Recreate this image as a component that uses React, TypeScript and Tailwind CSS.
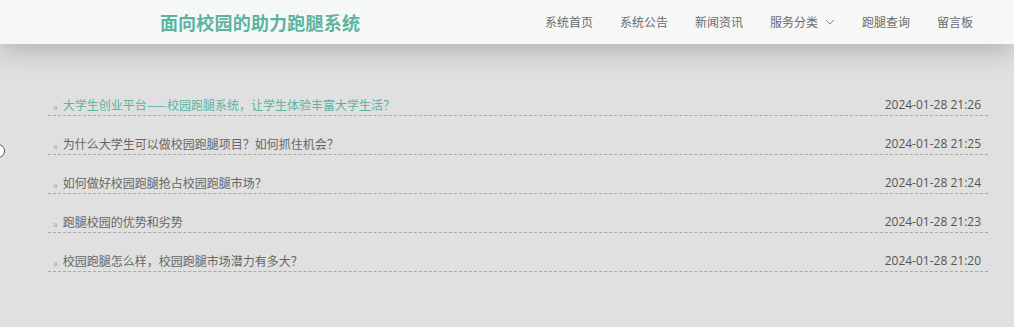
import React from "react";

const news = [
  { title: "大学生创业平台——校园跑腿系统，让学生体验丰富大学生活？", date: "2024-01-28 21:26", active: true },
  { title: "为什么大学生可以做校园跑腿项目？如何抓住机会？", date: "2024-01-28 21:25" },
  { title: "如何做好校园跑腿抢占校园跑腿市场？", date: "2024-01-28 21:24" },
  { title: "跑腿校园的优势和劣势", date: "2024-01-28 21:23" },
  { title: "校园跑腿怎么样，校园跑腿市场潜力有多大？", date: "2024-01-28 21:20" },
];

const nav = ["系统首页", "系统公告", "新闻资讯", "服务分类", "跑腿查询", "留言板"];

const cjk = "font-['Noto_Sans_CJK_SC',sans-serif]";

export default function App() {
  return (
    <div className={`relative w-[1014px] h-[327px] overflow-hidden bg-[#e0e0e0] ${cjk}`}>
      <header className="relative z-10 h-[44px] bg-[#f6f8f8] flex items-center shadow-[0_6px_28px_rgba(0,0,0,0.22)]">
        <div className="w-[520px] flex justify-center">
          <h1 className="text-[18px] font-bold text-[#5cb3a0] tracking-[0.2px]">面向校园的助力跑腿系统</h1>
        </div>
        <nav className="flex items-center gap-[27px] pl-[25px] text-[12px] text-[#6a6a6a]">
          {nav.map((n) => (
            <a key={n} className="flex items-center gap-[7px] cursor-pointer">
              {n}
              {n === "服务分类" && (
                <svg width="10" height="6" viewBox="0 0 10 6" fill="none" stroke="#888" strokeWidth="1">
                  <path d="M1 1l4 4 4-4" />
                </svg>
              )}
            </a>
          ))}
        </nav>
      </header>

      <div className="absolute left-[-9px] top-[144px] w-[14px] h-[14px] rounded-full border border-[#555] bg-white" />

      <ul className="mt-[33px] ml-[48px] w-[940px]">
        {news.map((n) => (
          <li
            key={n.date}
            className="h-[39px] flex items-end justify-between border-b border-dashed border-[#a8a8a8] pb-[1px] pl-[5px] pr-[7px]"
          >
            <span className={`flex items-center text-[12px] ${n.active ? "text-[#5cb3a0]" : "text-[#666]"}`}>
              <span className="text-[10px] text-[#959bd6] mr-[5px] mt-[4px]">»</span>
              {n.title}
            </span>
            <span className="text-[12px] text-[#555] font-['Open_Sans',sans-serif]">{n.date}</span>
          </li>
        ))}
      </ul>
    </div>
  );
}
